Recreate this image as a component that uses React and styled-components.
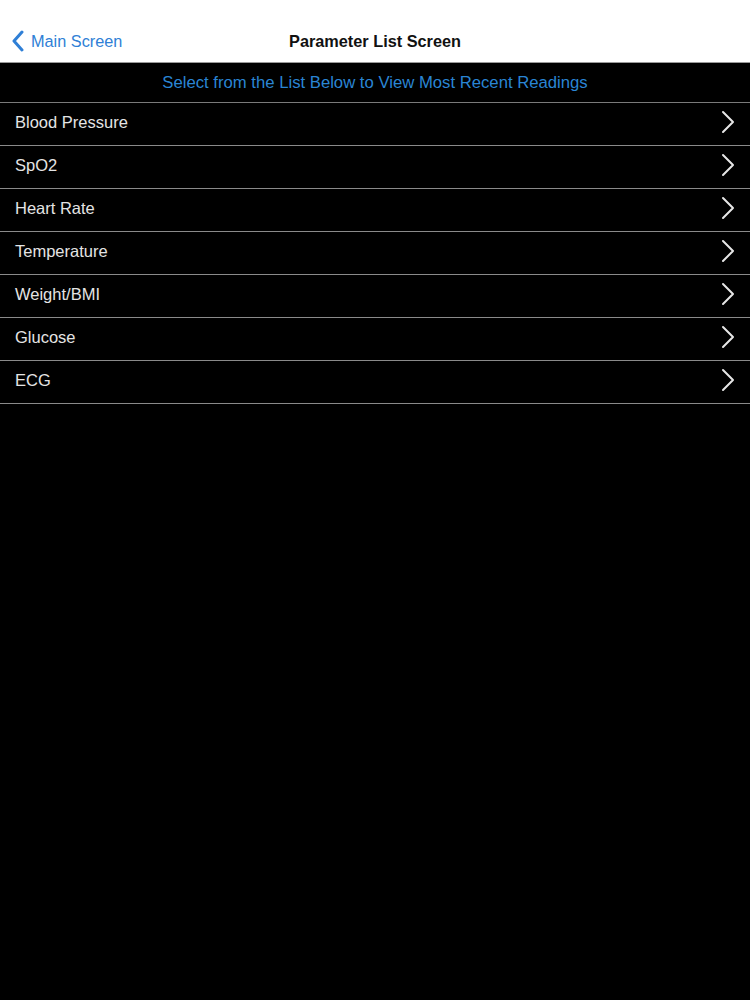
import React from "react";
import styled, { createGlobalStyle } from "styled-components";

const GlobalStyle = createGlobalStyle`
  html, body {
    margin: 0;
    padding: 0;
    background: #000;
    font-family: "Liberation Sans", Arial, sans-serif;
  }
`;

const params = [
  "Blood Pressure",
  "SpO2",
  "Heart Rate",
  "Temperature",
  "Weight/BMI",
  "Glucose",
  "ECG",
];

const App = () => {
  return (
    <Page>
      <GlobalStyle />
      <NavBar>
        <BackButton>
          <svg width="14" height="22" viewBox="0 0 14 22">
            <path
              d="M11 2 L3 11 L11 20"
              fill="none"
              stroke="#2f7fd6"
              strokeWidth="3"
              strokeLinecap="round"
              strokeLinejoin="round"
            />
          </svg>
          <BackLabel>Main Screen</BackLabel>
        </BackButton>
        <Title>Parameter List Screen</Title>
      </NavBar>
      <Banner>Select from the List Below to View Most Recent Readings</Banner>
      <List>
        {params.map((p) => (
          <Row key={p}>
            <RowLabel>{p}</RowLabel>
            <svg width="14" height="24" viewBox="0 0 14 24">
              <path
                d="M2 2 L12 12 L2 22"
                fill="none"
                stroke="#e6e6e6"
                strokeWidth="2"
                strokeLinecap="round"
                strokeLinejoin="round"
              />
            </svg>
          </Row>
        ))}
      </List>
    </Page>
  );
};

const Page = styled.div`
  min-height: 100vh;
  background: #000;
`;

const NavBar = styled.div`
  height: 63px;
  background: #fff;
  border-bottom: 1px solid #9a9a9a;
  position: relative;
  display: flex;
  align-items: center;
  justify-content: center;
  padding-top: 20px;
  box-sizing: border-box;
`;

const BackButton = styled.div`
  position: absolute;
  left: 11px;
  top: 20px;
  bottom: 0;
  display: flex;
  align-items: center;
  gap: 6px;
  cursor: pointer;
`;

const BackLabel = styled.span`
  color: #2f7fd6;
  font-size: 16.3px;
`;

const Title = styled.div`
  color: #111;
  font-size: 16.3px;
  font-weight: 700;
`;

const Banner = styled.div`
  height: 39px;
  border-bottom: 1px solid #7a7a7a;
  display: flex;
  align-items: center;
  justify-content: center;
  color: #2a85d4;
  font-size: 16.7px;
`;

const List = styled.div`
  display: flex;
  flex-direction: column;
`;

const Row = styled.div`
  height: 38px;
  padding: 0 15px 4px 15px;
  border-bottom: 1px solid #8a8a8a;
  display: flex;
  align-items: center;
  justify-content: space-between;
  cursor: pointer;
`;

const RowLabel = styled.span`
  color: #e4e4e4;
  font-size: 16.5px;
`;

export default App;
